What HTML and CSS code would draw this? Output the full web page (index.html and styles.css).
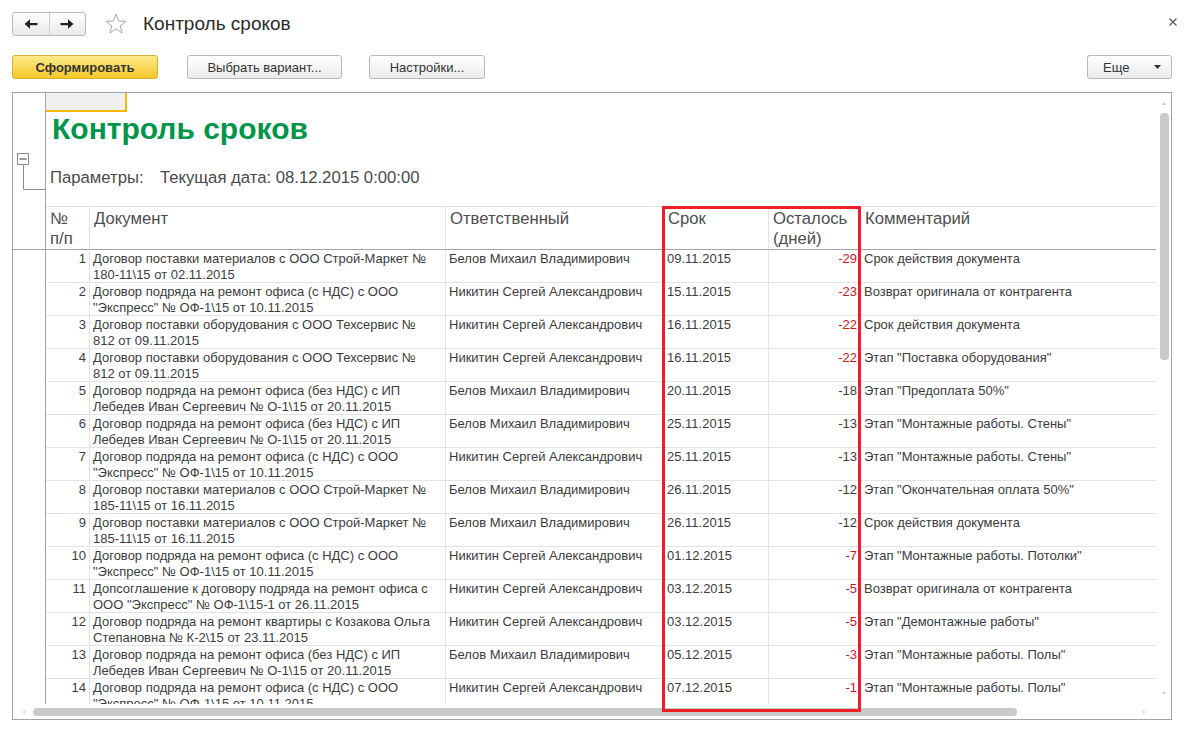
FILE: index.html
```html
<!DOCTYPE html>
<html lang="ru">
<head>
<meta charset="utf-8">
<title>Контроль сроков</title>
<link rel="stylesheet" href="styles.css">
</head>
<body>
<div class="topbar">
  <div class="nav">
    <div class="nav-btn"><svg width="14" height="12" viewBox="0 0 14 12"><path d="M0.5 6L6 1.2V10.8Z" fill="#222"/><rect x="5" y="5" width="8.5" height="2.2" fill="#222"/></svg></div>
    <div class="nav-btn"><svg width="14" height="12" viewBox="0 0 14 12"><path d="M13.5 6L8 1.2V10.8Z" fill="#222"/><rect x="0.5" y="5" width="8.5" height="2.2" fill="#222"/></svg></div>
  </div>
  <svg class="star" viewBox="0 0 22 22"><polygon points="11,1 13.6,8.1 21,8.3 15.2,12.9 17.2,20 11,15.9 4.8,20 6.8,12.9 1,8.3 8.4,8.1" fill="none" stroke="#a8a8a8" stroke-width="1"/></svg>
  <h1 class="page-title">Контроль сроков</h1>
  <svg class="close" viewBox="0 0 8 8"><path d="M0.5 0.5L7.5 7.5M7.5 0.5L0.5 7.5" stroke="#555" stroke-width="1.2"/></svg>
</div>

<div class="toolbar">
  <div class="btn btn-primary">Сформировать</div>
  <div class="btn btn-variant">Выбрать вариант...</div>
  <div class="btn btn-settings">Настройки...</div>
  <div class="btn btn-more">Еще<svg width="7" height="4" viewBox="0 0 7 4"><path d="M0 0H7L3.5 4Z" fill="#333"/></svg></div>
</div>

<div class="frame">
  <div class="viewport">
    <div class="top-area">
      <div class="g g-top">
        <svg class="outline" width="32" height="40" viewBox="0 0 32 40"><rect x="4.5" y="0.5" width="11" height="11" fill="#fff" stroke="#8c8c8c"/><path d="M6.5 6H13.5" stroke="#333" stroke-width="1"/><path d="M10.5 11.5V36.5H32" fill="none" stroke="#8c8c8c" stroke-width="1"/></svg>
      </div>
      <div class="sheet-top">
        <div class="sel"></div>
        <div class="report-title">Контроль сроков</div>
        <div class="params"><span class="params-label">Параметры:</span><span>Текущая дата: 08.12.2015 0:00:00</span></div>
      </div>
    </div>

    <div class="row head">
      <div class="g"></div>
      <div class="c">№<br>п/п</div>
      <div class="c">Документ</div>
      <div class="c">Ответственный</div>
      <div class="c">Срок</div>
      <div class="c">Осталось<br>(дней)</div>
      <div class="c last">Комментарий</div>
    </div>

    <div class="row">
      <div class="g"></div>
      <div class="c num">1</div>
      <div class="c">Договор поставки материалов с ООО Строй-Маркет №<br>180-11\15 от 02.11.2015</div>
      <div class="c">Белов Михаил Владимирович</div>
      <div class="c">09.11.2015</div>
      <div class="c num neg">-29</div>
      <div class="c last">Срок действия документа</div>
    </div>
    <div class="row">
      <div class="g"></div>
      <div class="c num">2</div>
      <div class="c">Договор подряда на ремонт офиса (с НДС) с ООО<br>"Экспресс" № ОФ-1\15 от 10.11.2015</div>
      <div class="c">Никитин Сергей Александрович</div>
      <div class="c">15.11.2015</div>
      <div class="c num neg">-23</div>
      <div class="c last">Возврат оригинала от контрагента</div>
    </div>
    <div class="row">
      <div class="g"></div>
      <div class="c num">3</div>
      <div class="c">Договор поставки оборудования с ООО Техсервис №<br>812 от 09.11.2015</div>
      <div class="c">Никитин Сергей Александрович</div>
      <div class="c">16.11.2015</div>
      <div class="c num neg">-22</div>
      <div class="c last">Срок действия документа</div>
    </div>
    <div class="row">
      <div class="g"></div>
      <div class="c num">4</div>
      <div class="c">Договор поставки оборудования с ООО Техсервис №<br>812 от 09.11.2015</div>
      <div class="c">Никитин Сергей Александрович</div>
      <div class="c">16.11.2015</div>
      <div class="c num neg">-22</div>
      <div class="c last">Этап "Поставка оборудования"</div>
    </div>
    <div class="row">
      <div class="g"></div>
      <div class="c num">5</div>
      <div class="c">Договор подряда на ремонт офиса (без НДС) с ИП<br>Лебедев Иван Сергеевич № О-1\15 от 20.11.2015</div>
      <div class="c">Белов Михаил Владимирович</div>
      <div class="c">20.11.2015</div>
      <div class="c num">-18</div>
      <div class="c last">Этап "Предоплата 50%"</div>
    </div>
    <div class="row">
      <div class="g"></div>
      <div class="c num">6</div>
      <div class="c">Договор подряда на ремонт офиса (без НДС) с ИП<br>Лебедев Иван Сергеевич № О-1\15 от 20.11.2015</div>
      <div class="c">Белов Михаил Владимирович</div>
      <div class="c">25.11.2015</div>
      <div class="c num">-13</div>
      <div class="c last">Этап "Монтажные работы. Стены"</div>
    </div>
    <div class="row">
      <div class="g"></div>
      <div class="c num">7</div>
      <div class="c">Договор подряда на ремонт офиса (с НДС) с ООО<br>"Экспресс" № ОФ-1\15 от 10.11.2015</div>
      <div class="c">Никитин Сергей Александрович</div>
      <div class="c">25.11.2015</div>
      <div class="c num">-13</div>
      <div class="c last">Этап "Монтажные работы. Стены"</div>
    </div>
    <div class="row">
      <div class="g"></div>
      <div class="c num">8</div>
      <div class="c">Договор поставки материалов с ООО Строй-Маркет №<br>185-11\15 от 16.11.2015</div>
      <div class="c">Белов Михаил Владимирович</div>
      <div class="c">26.11.2015</div>
      <div class="c num">-12</div>
      <div class="c last">Этап "Окончательная оплата 50%"</div>
    </div>
    <div class="row">
      <div class="g"></div>
      <div class="c num">9</div>
      <div class="c">Договор поставки материалов с ООО Строй-Маркет №<br>185-11\15 от 16.11.2015</div>
      <div class="c">Белов Михаил Владимирович</div>
      <div class="c">26.11.2015</div>
      <div class="c num">-12</div>
      <div class="c last">Срок действия документа</div>
    </div>
    <div class="row">
      <div class="g"></div>
      <div class="c num">10</div>
      <div class="c">Договор подряда на ремонт офиса (с НДС) с ООО<br>"Экспресс" № ОФ-1\15 от 10.11.2015</div>
      <div class="c">Никитин Сергей Александрович</div>
      <div class="c">01.12.2015</div>
      <div class="c num neg">-7</div>
      <div class="c last">Этап "Монтажные работы. Потолки"</div>
    </div>
    <div class="row">
      <div class="g"></div>
      <div class="c num">11</div>
      <div class="c">Допсоглашение к договору подряда на ремонт офиса с<br>ООО "Экспресс" № ОФ-1\15-1 от 26.11.2015</div>
      <div class="c">Никитин Сергей Александрович</div>
      <div class="c">03.12.2015</div>
      <div class="c num neg">-5</div>
      <div class="c last">Возврат оригинала от контрагента</div>
    </div>
    <div class="row">
      <div class="g"></div>
      <div class="c num">12</div>
      <div class="c">Договор подряда на ремонт квартиры с Козакова Ольга<br>Степановна № К-2\15 от 23.11.2015</div>
      <div class="c">Никитин Сергей Александрович</div>
      <div class="c">03.12.2015</div>
      <div class="c num neg">-5</div>
      <div class="c last">Этап "Демонтажные работы"</div>
    </div>
    <div class="row">
      <div class="g"></div>
      <div class="c num">13</div>
      <div class="c">Договор подряда на ремонт офиса (без НДС) с ИП<br>Лебедев Иван Сергеевич № О-1\15 от 20.11.2015</div>
      <div class="c">Белов Михаил Владимирович</div>
      <div class="c">05.12.2015</div>
      <div class="c num neg">-3</div>
      <div class="c last">Этап "Монтажные работы. Полы"</div>
    </div>
    <div class="row">
      <div class="g"></div>
      <div class="c num">14</div>
      <div class="c">Договор подряда на ремонт офиса (с НДС) с ООО<br>"Экспресс" № ОФ-1\15 от 10.11.2015</div>
      <div class="c">Никитин Сергей Александрович</div>
      <div class="c">07.12.2015</div>
      <div class="c num neg">-1</div>
      <div class="c last">Этап "Монтажные работы. Полы"</div>
    </div>
  </div>

  <div class="vscroll">
    <span class="arr arr-up"></span>
    <span class="vthumb"></span>
    <span class="arr arr-down"></span>
  </div>
  <div class="hscroll">
    <span class="arr arr-left"></span>
    <span class="hthumb"></span>
    <span class="arr arr-right"></span>
  </div>
  <div class="corner"></div>

  <div class="highlight"></div>
</div>
</body>
</html>
```

FILE: styles.css
```css
* { box-sizing: border-box; }

body {
  margin: 0;
  font-family: "Liberation Sans", Arial, sans-serif;
  color: #333;
  background: #fff;
}

/* ---------- top bar ---------- */
.topbar {
  display: flex;
  align-items: center;
  height: 24px;
  margin: 12px 15px 0 12px;
}
.nav {
  display: flex;
  width: 74px;
  height: 24px;
  border: 1px solid #b9b9b9;
  border-radius: 3px;
  background: linear-gradient(#ffffff, #e9e9e9);
}
.nav-btn {
  flex: 1;
  display: flex;
  align-items: center;
  justify-content: center;
}
.nav-btn + .nav-btn { border-left: 1px solid #cbcbcb; }
.star {
  width: 22px;
  height: 22px;
  margin-left: 19px;
}
.page-title {
  margin: 0 0 0 16px;
  font-size: 19px;
  font-weight: normal;
  color: #2b2b2b;
  line-height: 24px;
}
.close {
  width: 8px;
  height: 8px;
  margin-left: auto;
  align-self: flex-start;
  margin-top: 6px;
}

/* ---------- toolbar ---------- */
.toolbar {
  display: flex;
  height: 24px;
  margin: 19px 20px 0 12px;
}
.btn {
  height: 24px;
  display: flex;
  align-items: center;
  justify-content: center;
  border: 1px solid #b9b9b9;
  border-radius: 3px;
  background: linear-gradient(#ffffff, #ebebeb);
  font-size: 13px;
  color: #333;
}
.btn-primary {
  width: 146px;
  font-weight: bold;
  background: linear-gradient(#fde98c, #f6c82a);
  border-color: #dbb02d;
}
.btn-variant { width: 155px; margin-left: 29px; }
.btn-settings { width: 116px; margin-left: 27px; }
.btn-more {
  width: 85px;
  margin-left: auto;
  justify-content: flex-start;
  padding-left: 15px;
}
.btn-more svg { margin-left: auto; margin-right: 10px; }

/* ---------- report frame ---------- */
.frame {
  position: relative;
  margin: 13px 20px 0 12px;
  height: 628px;
  border: 1px solid #a3a3a3;
  display: grid;
  grid-template-columns: 1fr 15px;
  grid-template-rows: 1fr 15px;
}
.viewport {
  overflow: hidden;
  display: flex;
  flex-direction: column;
}

.top-area {
  display: flex;
  flex: none;
}
.g {
  border-right: 1px solid #a3a3a3;
}
.g-top {
  width: 33px;
  flex: none;
  padding-top: 60px;
}
.outline { display: block; }

.sheet-top {
  display: flex;
  flex-direction: column;
  height: 113px;
}
.sel {
  width: 81px;
  height: 19px;
  background: #f0f0f0;
  border-right: 2px solid #f6b900;
  border-bottom: 2px solid #f6b900;
}
.report-title {
  font-size: 30px;
  line-height: 34px;
  font-weight: bold;
  color: #00964a;
  padding-left: 6px;
}
.params {
  margin-top: 23px;
  font-size: 16.7px;
  line-height: 18px;
  color: #4a4a4a;
  padding-left: 4px;
  white-space: nowrap;
}
.params-label {
  display: inline-block;
  width: 110px;
}

/* ---------- table ---------- */
.row {
  display: grid;
  grid-template-columns: 33px 44px 356px 218px 105px 92px 1fr;
  flex: none;
}
.c {
  height: 33px;
  padding: 1px 3px 0 3px;
  border-right: 1px solid #e3e3e3;
  border-bottom: 1px solid #e3e3e3;
  font-size: 13px;
  line-height: 16px;
  color: #3c3c3c;
  white-space: nowrap;
  overflow: hidden;
}
.c.last { border-right: none; }
.num { text-align: right; }
.neg { color: #cc1717; }

.head .g { border-bottom: 1px solid #a3a3a3; }
.head .c {
  height: 44px;
  padding: 2px 4px 0 4px;
  border-top: 1px solid #e3e3e3;
  border-bottom: 1px solid #a3a3a3;
  font-size: 16.7px;
  line-height: 20px;
  color: #4e4e4e;
}

/* ---------- scrollbars ---------- */
.vscroll {
  display: flex;
  flex-direction: column;
  align-items: center;
  padding: 9px 0 9px 1px;
}
.vthumb {
  width: 9px;
  height: 247px;
  margin-top: 8px;
  border-radius: 4px;
  background: #cacaca;
}
.hscroll {
  display: flex;
  align-items: center;
  padding: 0 10px 0 9px;
}
.hthumb {
  width: 984px;
  height: 8px;
  margin-left: 8px;
  border-radius: 4px;
  background: #cacaca;
}
.arr {
  width: 0;
  height: 0;
  border-style: solid;
  border-color: transparent;
}
.arr-up { border-width: 0 2.5px 3px; border-bottom-color: #cfcfcf; }
.arr-down { margin-top: auto; border-width: 3px 2.5px 0; border-top-color: #cfcfcf; }
.arr-left { border-width: 2.5px 3px 2.5px 0; border-right-color: #d6d6d6; }
.arr-right { margin-left: auto; border-width: 2.5px 0 2.5px 3px; border-left-color: #d6d6d6; }

/* ---------- annotation ---------- */
.highlight {
  position: absolute;
  left: 649px;
  top: 113px;
  width: 199px;
  height: 506px;
  border: 3px solid #ee1f26;
  pointer-events: none;
}
```
